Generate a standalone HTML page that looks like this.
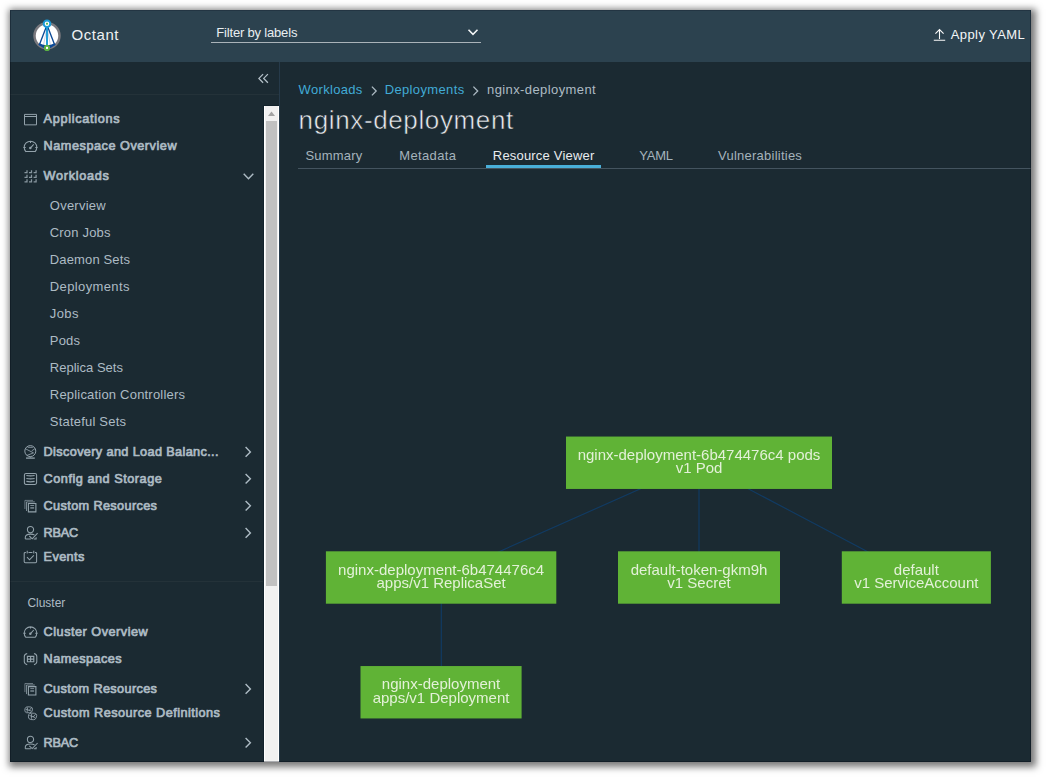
<!DOCTYPE html>
<html><head><meta charset="utf-8"><title>Octant</title>
<style>
html,body{margin:0;padding:0;background:#fff;}
body{width:1047px;height:778px;overflow:hidden;position:relative;font-family:"Liberation Sans",sans-serif;}
.t{position:absolute;white-space:nowrap;display:block;}
.b{position:absolute;display:block;}
.c{text-align:center;}
</style></head><body>
<div class="b" style="left:10px;top:10px;width:1021px;height:752px;background:#1b2a32;box-shadow:2px 2px 7px 3px rgba(0,0,0,0.53);"></div>
<div class="b" style="left:10px;top:10px;width:1021px;height:52px;background:#2c424f;"></div>
<svg class="b" style="left:31px;top:18px;" width="33" height="37" viewBox="0 0 33 37" fill="none"><g transform="translate(0.00 0.00)">
<circle cx="16" cy="17.8" r="12.5" fill="#fff" stroke="#7a797e" stroke-width="2.5"/>
<path d="M16 7 L8.2 27.2 M16 7 L23.8 27.2" stroke="#0d4a96" stroke-width="1.35"/>
<path d="M16 9 L12.4 28 M16 9 L19.6 28" stroke="#8fa6c8" stroke-width="0.5"/>
<path d="M7.4 26.8 Q16 34.2 24.6 26.8 L23.6 25.2 Q16 29.4 8.4 25.2 Z" fill="#0d4a96"/>
<path d="M16 6 L16 29" stroke="#1a9ad7" stroke-width="1.9"/>
<circle cx="16" cy="5.7" r="4.3" fill="#1a9ad7"/>
<circle cx="16" cy="5.7" r="2.3" fill="#fff"/>
<rect x="15.1" y="4.8" width="1.8" height="1.8" fill="#4caf3c"/>
<circle cx="16" cy="29.9" r="3.1" fill="#5cb344"/>
<rect x="15" y="28.9" width="2" height="2" fill="#fff"/>
</g></svg>
<span class="t " style="left:71.50px;top:26.00px;font-size:15px;line-height:17px;color:#eef1f3;letter-spacing:0.559px;">Octant</span>
<span class="t " style="left:216.30px;top:24.70px;font-size:13px;line-height:15px;color:#e9eef1;letter-spacing:-0.182px;">Filter by labels</span>
<div class="b" style="left:211px;top:42px;width:270px;height:1px;background:#aab3b9;"></div>
<svg class="b" style="left:467px;top:28px;" width="13" height="10" viewBox="0 0 13 10" fill="none"><g transform="translate(0.00 0.00)"><path d="M1.5 1.8 L6 6.4 L10.5 1.8" stroke="#f4f6f7" stroke-width="1.55"/></g></svg>
<svg class="b" style="left:932px;top:28px;" width="16" height="15" viewBox="0 0 16 15" fill="none"><g transform="translate(0.00 0.00)"><path d="M7.5 11 V1.8 M3.4 5.6 L7.5 1.6 L11.6 5.6 M1.8 12.2 H13.2" stroke="#fafafa" stroke-width="1.1"/></g></svg>
<span class="t " style="left:950.80px;top:26.80px;font-size:13px;line-height:15px;color:#f4f6f7;letter-spacing:0.395px;">Apply YAML</span>
<div class="b" style="left:10px;top:94px;width:269px;height:1px;background:#243239;"></div>
<div class="b" style="left:279px;top:62px;width:1px;height:700px;background:#263a4a;"></div>
<div class="b" style="left:10px;top:581px;width:254px;height:1px;background:#243239;"></div>
<svg class="b" style="left:257px;top:72px;" width="14" height="14" viewBox="0 0 14 14" fill="none"><g transform="translate(0.00 0.00)"><path d="M6.1 2.1 L1.9 6.4 L6.1 10.7 M10.9 2.1 L6.7 6.4 L10.9 10.7" stroke="#b4c1c9" stroke-width="1.25"/></g></svg>
<div class="b" style="left:263px;top:105px;width:16px;height:657px;background:#12222b;"></div>
<div class="b" style="left:264px;top:106px;width:15px;height:656px;background:#f1f1f1;box-shadow:inset 1px 0 0 #fff,inset -1px 0 0 #fff,inset 0 -1px 0 #fff;"></div>
<svg class="b" style="left:264px;top:106px;" width="16" height="16" viewBox="0 0 16 16" fill="none"><g transform="translate(0.00 0.00)"><path d="M4 10 L7.5 5.5 L11 10 Z" fill="#a3a3a3"/></g></svg>
<div class="b" style="left:266px;top:121px;width:11px;height:464.5px;background:#c1c1c1;"></div>
<svg class="b" style="left:22px;top:111px;" width="17" height="17" viewBox="0 0 17 17" fill="none"><g transform="translate(0.50 0.65)"><path d="M2 2.75 H14 V13.2 H2 Z M2 4.85 H14" stroke="#93a2ab" stroke-width="1" /></g></svg>
<span class="t " style="left:43.60px;top:112.10px;font-size:12.7px;line-height:14px;color:#adbbc4;letter-spacing:0.688px;-webkit-text-stroke:0.7px #adbbc4;">Applications</span>
<svg class="b" style="left:22px;top:138px;" width="17" height="17" viewBox="0 0 17 17" fill="none"><g transform="translate(0.50 0.70)"><path d="M3 12.8 H13 M3.4 13.1 A6.3 6.3 0 1 1 12.6 13.1 M8 9.2 L11.2 5.6 M0.8 8.8 H3.2 M12.8 8.8 H15.2 M8 2.6 V4.2" stroke="#93a2ab" stroke-width="1.05" /><circle cx="7.8" cy="9.3" r="1.25" fill="#93a2ab"/></g></svg>
<span class="t " style="left:43.60px;top:139.20px;font-size:12.7px;line-height:14px;color:#adbbc4;letter-spacing:0.522px;-webkit-text-stroke:0.7px #adbbc4;">Namespace Overview</span>
<svg class="b" style="left:22px;top:168px;" width="17" height="17" viewBox="0 0 17 17" fill="none"><g transform="translate(0.50 0.70)"><path d="M4.5 1.5 V4.0 H2.0" stroke="#93a2ab" stroke-width="1.25" opacity="0.9"/><path d="M4.5 6.1 V8.6 H2.0" stroke="#93a2ab" stroke-width="1.25" opacity="0.9"/><path d="M4.5 10.6 V13.1 H2.0" stroke="#93a2ab" stroke-width="1.25" opacity="0.9"/><path d="M9.0 1.5 V4.0 H6.5" stroke="#93a2ab" stroke-width="1.25" opacity="0.9"/><path d="M9.0 6.1 V8.6 H6.5" stroke="#93a2ab" stroke-width="1.25" opacity="0.9"/><path d="M9.0 10.6 V13.1 H6.5" stroke="#93a2ab" stroke-width="1.25" opacity="0.9"/><path d="M13.6 1.5 V4.0 H11.1" stroke="#93a2ab" stroke-width="1.25" opacity="0.9"/><path d="M13.6 6.1 V8.6 H11.1" stroke="#93a2ab" stroke-width="1.25" opacity="0.9"/><path d="M13.6 10.6 V13.1 H11.1" stroke="#93a2ab" stroke-width="1.25" opacity="0.9"/></g></svg>
<span class="t " style="left:43.60px;top:169.20px;font-size:12.7px;line-height:14px;color:#adbbc4;letter-spacing:0.700px;-webkit-text-stroke:0.7px #adbbc4;">Workloads</span>
<svg class="b" style="left:242px;top:172px;" width="13" height="9" viewBox="0 0 13 9" fill="none"><g transform="translate(0.00 0.30)"><path d="M1.7 1.4 L6.5 6.4 L11.3 1.4" stroke="#adbbc4" stroke-width="1.4"/></g></svg>
<span class="t " style="left:49.80px;top:198.00px;font-size:13px;line-height:15px;color:#adbbc4;letter-spacing:0.245px;">Overview</span>
<span class="t " style="left:49.80px;top:225.00px;font-size:13px;line-height:15px;color:#adbbc4;letter-spacing:0.179px;">Cron Jobs</span>
<span class="t " style="left:49.80px;top:252.00px;font-size:13px;line-height:15px;color:#adbbc4;letter-spacing:0.142px;">Daemon Sets</span>
<span class="t " style="left:49.80px;top:279.00px;font-size:13px;line-height:15px;color:#adbbc4;letter-spacing:0.381px;">Deployments</span>
<span class="t " style="left:49.80px;top:306.00px;font-size:13px;line-height:15px;color:#adbbc4;letter-spacing:0.377px;">Jobs</span>
<span class="t " style="left:49.80px;top:333.00px;font-size:13px;line-height:15px;color:#adbbc4;letter-spacing:0.186px;">Pods</span>
<span class="t " style="left:49.80px;top:360.00px;font-size:13px;line-height:15px;color:#adbbc4;letter-spacing:0.018px;">Replica Sets</span>
<span class="t " style="left:49.80px;top:387.00px;font-size:13px;line-height:15px;color:#adbbc4;letter-spacing:0.199px;">Replication Controllers</span>
<span class="t " style="left:49.80px;top:414.00px;font-size:13px;line-height:15px;color:#adbbc4;letter-spacing:0.207px;">Stateful Sets</span>
<svg class="b" style="left:22px;top:444px;" width="17" height="17" viewBox="0 0 17 17" fill="none"><g transform="translate(0.50 0.70)"><path d="M13.3 6.4 A5.5 5.5 0 1 1 2.3 6.4 A5.5 5.5 0 1 1 13.3 6.4 Z" stroke="#93a2ab" stroke-width="1" /><path d="M5.2 2.6 H10.4 M3.2 4.2 L11 8.2 L4.2 10.8 M12.4 4 L9.2 6.2 M7.8 12 V13" stroke="#93a2ab" stroke-width="0.85" /><path d="M3.5 13.4 H12.3" stroke="#93a2ab" stroke-width="1.3" /></g></svg>
<span class="t " style="left:43.60px;top:445.20px;font-size:12.7px;line-height:14px;color:#adbbc4;letter-spacing:0.366px;-webkit-text-stroke:0.7px #adbbc4;">Discovery and Load Balanc...</span>
<svg class="b" style="left:244px;top:445px;" width="9" height="13" viewBox="0 0 9 13" fill="none"><g transform="translate(0.00 0.80)"><path d="M1.6 1.3 L6.4 6.1 L1.6 10.9" stroke="#adbbc4" stroke-width="1.4"/></g></svg>
<svg class="b" style="left:22px;top:471px;" width="17" height="17" viewBox="0 0 17 17" fill="none"><g transform="translate(0.50 0.60)"><path d="M1.9 3.4 Q1.9 1.8 3.5 1.8 H12.5 Q14.1 1.8 14.1 3.4 V11.2 Q14.1 12.8 12.5 12.8 H3.5 Q1.9 12.8 1.9 11.2 Z" stroke="#93a2ab" stroke-width="1.05" /><path d="M3.9 3.9 Q8 4.8 12.1 3.9 M3.9 6.9 Q8 7.8 12.1 6.9 M3.9 9.8 Q8 10.7 12.1 9.8" stroke="#93a2ab" stroke-width="1.15" /></g></svg>
<span class="t " style="left:43.60px;top:472.10px;font-size:12.7px;line-height:14px;color:#adbbc4;letter-spacing:0.523px;-webkit-text-stroke:0.7px #adbbc4;">Config and Storage</span>
<svg class="b" style="left:244px;top:472px;" width="9" height="13" viewBox="0 0 9 13" fill="none"><g transform="translate(0.00 0.70)"><path d="M1.6 1.3 L6.4 6.1 L1.6 10.9" stroke="#adbbc4" stroke-width="1.4"/></g></svg>
<svg class="b" style="left:22px;top:498px;" width="17" height="17" viewBox="0 0 17 17" fill="none"><g transform="translate(0.50 0.60)"><path d="M5.9 4.9 H13.4 V13.3 H5.9 Z" stroke="#93a2ab" stroke-width="1.1" /><path d="M7.8 6.9 H11.6" stroke="#93a2ab" stroke-width="0.8" /><path d="M7.8 9.3 H11.6" stroke="#93a2ab" stroke-width="1.5" opacity="0.8"/><path d="M4 12.4 V3.3 H12.3" stroke="#93a2ab" stroke-width="1" opacity="0.8"/><path d="M2.4 10.4 V1.8 H10.5" stroke="#93a2ab" stroke-width="1" opacity="0.65"/></g></svg>
<span class="t " style="left:43.60px;top:499.10px;font-size:12.7px;line-height:14px;color:#adbbc4;letter-spacing:0.366px;-webkit-text-stroke:0.7px #adbbc4;">Custom Resources</span>
<svg class="b" style="left:244px;top:499px;" width="9" height="13" viewBox="0 0 9 13" fill="none"><g transform="translate(0.00 0.70)"><path d="M1.6 1.3 L6.4 6.1 L1.6 10.9" stroke="#adbbc4" stroke-width="1.4"/></g></svg>
<svg class="b" style="left:22px;top:525px;" width="17" height="17" viewBox="0 0 17 17" fill="none"><g transform="translate(0.50 0.70)"><path d="M11.1 3.9 A3.1 3.1 0 1 1 4.9 3.9 A3.1 3.1 0 1 1 11.1 3.9 Z M2.8 13.2 V11.6 Q2.8 8.4 8 8.4 Q10.6 8.4 12 9.2 M2.8 13.2 H8.4 M11.2 13.2 H13.6 V11.6 M6.8 10.3 L9.7 13.1 L15.1 7.5" stroke="#93a2ab" stroke-width="1.05" /></g></svg>
<span class="t " style="left:43.60px;top:526.20px;font-size:12.7px;line-height:14px;color:#adbbc4;letter-spacing:-0.217px;-webkit-text-stroke:0.7px #adbbc4;">RBAC</span>
<svg class="b" style="left:244px;top:526px;" width="9" height="13" viewBox="0 0 9 13" fill="none"><g transform="translate(0.00 0.80)"><path d="M1.6 1.3 L6.4 6.1 L1.6 10.9" stroke="#adbbc4" stroke-width="1.4"/></g></svg>
<svg class="b" style="left:22px;top:549px;" width="17" height="17" viewBox="0 0 17 17" fill="none"><g transform="translate(0.50 0.90)"><path d="M3.4 2.5 H2.9 Q1.7 2.5 1.7 3.7 V11.6 Q1.7 12.8 2.9 12.8 H12.9 Q14.1 12.8 14.1 11.6 V3.7 Q14.1 2.5 12.9 2.5 H12.5 M6 2.5 H9.9 M4.5 7.3 L7 9.9 L11.3 5.4" stroke="#93a2ab" stroke-width="1.05" /><path d="M4.75 0.9 V3.7 M11.2 0.9 V3.7" stroke="#93a2ab" stroke-width="1.3" opacity="0.8"/></g></svg>
<span class="t " style="left:43.60px;top:550.40px;font-size:12.7px;line-height:14px;color:#adbbc4;letter-spacing:0.377px;-webkit-text-stroke:0.7px #adbbc4;">Events</span>
<span class="t " style="left:27.40px;top:596.00px;font-size:12px;line-height:14px;color:#adbbc4;letter-spacing:-0.019px;">Cluster</span>
<svg class="b" style="left:22px;top:624px;" width="17" height="17" viewBox="0 0 17 17" fill="none"><g transform="translate(0.50 0.40)"><path d="M3 12.8 H13 M3.4 13.1 A6.3 6.3 0 1 1 12.6 13.1 M8 9.2 L11.2 5.6 M0.8 8.8 H3.2 M12.8 8.8 H15.2 M8 2.6 V4.2" stroke="#93a2ab" stroke-width="1.05" /><circle cx="7.8" cy="9.3" r="1.25" fill="#93a2ab"/></g></svg>
<span class="t " style="left:43.60px;top:624.90px;font-size:12.7px;line-height:14px;color:#adbbc4;letter-spacing:0.500px;-webkit-text-stroke:0.7px #adbbc4;">Cluster Overview</span>
<svg class="b" style="left:22px;top:651px;" width="17" height="17" viewBox="0 0 17 17" fill="none"><g transform="translate(0.50 0.60)"><path d="M4.7 1.9 Q1.8 2.8 1.8 4.8 V10.2 Q1.8 12.2 4.7 13.1 M11.5 1.9 Q14.3 2.8 14.3 4.8 V10.2 Q14.3 12.2 11.5 13.1" stroke="#93a2ab" stroke-width="1.05" /><path d="M4.9 4.8 H11.3 V10.1 H4.9 Z M8.1 4.8 V10.1 M4.9 7.45 H11.3" stroke="#93a2ab" stroke-width="1.15" /></g></svg>
<span class="t " style="left:43.60px;top:652.10px;font-size:12.7px;line-height:14px;color:#adbbc4;letter-spacing:0.426px;-webkit-text-stroke:0.7px #adbbc4;">Namespaces</span>
<svg class="b" style="left:22px;top:681px;" width="17" height="17" viewBox="0 0 17 17" fill="none"><g transform="translate(0.50 0.70)"><path d="M5.9 4.9 H13.4 V13.3 H5.9 Z" stroke="#93a2ab" stroke-width="1.1" /><path d="M7.8 6.9 H11.6" stroke="#93a2ab" stroke-width="0.8" /><path d="M7.8 9.3 H11.6" stroke="#93a2ab" stroke-width="1.5" opacity="0.8"/><path d="M4 12.4 V3.3 H12.3" stroke="#93a2ab" stroke-width="1" opacity="0.8"/><path d="M2.4 10.4 V1.8 H10.5" stroke="#93a2ab" stroke-width="1" opacity="0.65"/></g></svg>
<span class="t " style="left:43.60px;top:682.20px;font-size:12.7px;line-height:14px;color:#adbbc4;letter-spacing:0.366px;-webkit-text-stroke:0.7px #adbbc4;">Custom Resources</span>
<svg class="b" style="left:244px;top:682px;" width="9" height="13" viewBox="0 0 9 13" fill="none"><g transform="translate(0.00 0.80)"><path d="M1.6 1.3 L6.4 6.1 L1.6 10.9" stroke="#adbbc4" stroke-width="1.4"/></g></svg>
<svg class="b" style="left:22px;top:705px;" width="17" height="17" viewBox="0 0 17 17" fill="none"><g transform="translate(0.50 0.50)"><path d="M2.6 3 Q3.2 1.2 5.2 1.3 L8.2 1.5 Q10 1.8 10 3.6 L9.6 5.6 Q9 7.2 7.2 7.3 L4 7.2 Q2.2 6.6 2.3 4.8 Z M3.2 3.6 L8.8 5.6 M5 2 L4.6 6.6 M9 2.2 L6.6 5" stroke="#93a2ab" stroke-width="0.9" /><path d="M6.2 9.2 Q6.8 7.6 8.8 7.6 L12 7.8 Q14.2 8.2 14.2 10 L13.6 12.4 Q13 14.2 11 14.2 L8 14 Q5.8 13.4 5.9 11.4 Z M7 10 L12.6 12 M9.2 8.2 L8.8 13.4 M13 8.8 L10.4 11.6" stroke="#93a2ab" stroke-width="0.9" /></g></svg>
<span class="t " style="left:43.60px;top:706.00px;font-size:12.7px;line-height:14px;color:#adbbc4;letter-spacing:0.460px;-webkit-text-stroke:0.7px #adbbc4;">Custom Resource Definitions</span>
<svg class="b" style="left:22px;top:735px;" width="17" height="17" viewBox="0 0 17 17" fill="none"><g transform="translate(0.50 0.50)"><path d="M11.1 3.9 A3.1 3.1 0 1 1 4.9 3.9 A3.1 3.1 0 1 1 11.1 3.9 Z M2.8 13.2 V11.6 Q2.8 8.4 8 8.4 Q10.6 8.4 12 9.2 M2.8 13.2 H8.4 M11.2 13.2 H13.6 V11.6 M6.8 10.3 L9.7 13.1 L15.1 7.5" stroke="#93a2ab" stroke-width="1.05" /></g></svg>
<span class="t " style="left:43.60px;top:736.00px;font-size:12.7px;line-height:14px;color:#adbbc4;letter-spacing:-0.217px;-webkit-text-stroke:0.7px #adbbc4;">RBAC</span>
<svg class="b" style="left:244px;top:736px;" width="9" height="13" viewBox="0 0 9 13" fill="none"><g transform="translate(0.00 0.60)"><path d="M1.6 1.3 L6.4 6.1 L1.6 10.9" stroke="#adbbc4" stroke-width="1.4"/></g></svg>
<span class="t " style="left:298.60px;top:82.00px;font-size:13px;line-height:15px;color:#41abd6;letter-spacing:0.314px;">Workloads</span>
<span class="t " style="left:384.70px;top:82.00px;font-size:13px;line-height:15px;color:#41abd6;letter-spacing:0.361px;">Deployments</span>
<span class="t " style="left:487.00px;top:82.00px;font-size:13px;line-height:15px;color:#adbbc4;letter-spacing:0.403px;">nginx-deployment</span>
<svg class="b" style="left:370px;top:85px;" width="8" height="12" viewBox="0 0 8 12" fill="none"><g transform="translate(0.50 0.00)"><path d="M1.4 1.6 L5.7 6 L1.4 10.4" stroke="#adbbc4" stroke-width="1.3"/></g></svg>
<svg class="b" style="left:472px;top:85px;" width="8" height="12" viewBox="0 0 8 12" fill="none"><g transform="translate(0.00 0.00)"><path d="M1.4 1.6 L5.7 6 L1.4 10.4" stroke="#adbbc4" stroke-width="1.3"/></g></svg>
<span class="t " style="left:298.60px;top:105.00px;font-size:26px;line-height:30px;color:#e9ecef;letter-spacing:0.629px;-webkit-text-stroke:0.55px #1b2a32;">nginx-deployment</span>
<span class="t " style="left:305.50px;top:148.10px;font-size:13px;line-height:15px;color:#a5b3bc;letter-spacing:0.179px;">Summary</span>
<span class="t " style="left:399.30px;top:148.10px;font-size:13px;line-height:15px;color:#a5b3bc;letter-spacing:0.354px;">Metadata</span>
<span class="t " style="left:492.80px;top:148.10px;font-size:13px;line-height:15px;color:#e9ecef;letter-spacing:0.194px;">Resource Viewer</span>
<span class="t " style="left:639.20px;top:148.10px;font-size:13px;line-height:15px;color:#a5b3bc;letter-spacing:-0.213px;">YAML</span>
<span class="t " style="left:718.00px;top:148.10px;font-size:13px;line-height:15px;color:#a5b3bc;letter-spacing:0.244px;">Vulnerabilities</span>
<div class="b" style="left:298px;top:168px;width:733px;height:1px;background:#44545f;"></div>
<div class="b" style="left:486px;top:165px;width:115px;height:3px;background:#49afd9;"></div>
<svg class="b" style="left:280px;top:170px;" width="751" height="592" viewBox="280 170 751 592" fill="none"><path d="M699 462.75 L699 577.5 M699 462.75 L441 577.5 M699 462.75 L916.5 577.5 M441.3 577.5 L441.3 692" stroke="#113b63" stroke-width="1.15"/></svg>
<svg class="b" style="left:280px;top:170px;will-change:transform;" width="751" height="592" viewBox="280 170 751 592" fill="none"><g font-family="Liberation Sans, sans-serif" font-size="15" fill="#e3f1d8" text-anchor="middle"><rect x="566" y="436.55" width="266.00" height="52.4" fill="#60b336"/><text x="699.00" y="459.75">nginx-deployment-6b474476c4 pods</text><text x="699.00" y="473.25">v1 Pod</text><rect x="325.9" y="551.30" width="230.40" height="52.4" fill="#60b336"/><text x="441.10" y="574.50">nginx-deployment-6b474476c4</text><text x="441.10" y="588.00">apps/v1 ReplicaSet</text><rect x="618" y="551.30" width="162.00" height="52.4" fill="#60b336"/><text x="699.00" y="574.50">default-token-gkm9h</text><text x="699.00" y="588.00">v1 Secret</text><rect x="841.8" y="551.30" width="149.10" height="52.4" fill="#60b336"/><text x="916.35" y="574.50">default</text><text x="916.35" y="588.00">v1 ServiceAccount</text><rect x="360.5" y="666.05" width="161.10" height="52.4" fill="#60b336"/><text x="441.05" y="689.25">nginx-deployment</text><text x="441.05" y="702.75">apps/v1 Deployment</text></g></svg>
<div class="b" style="left:10px;top:10px;width:1021px;height:752px;background:transparent;box-sizing:border-box;border:1px solid rgba(0,8,20,0.33);border-top-color:rgba(0,10,25,0.2);pointer-events:none;"></div>
</body></html>
